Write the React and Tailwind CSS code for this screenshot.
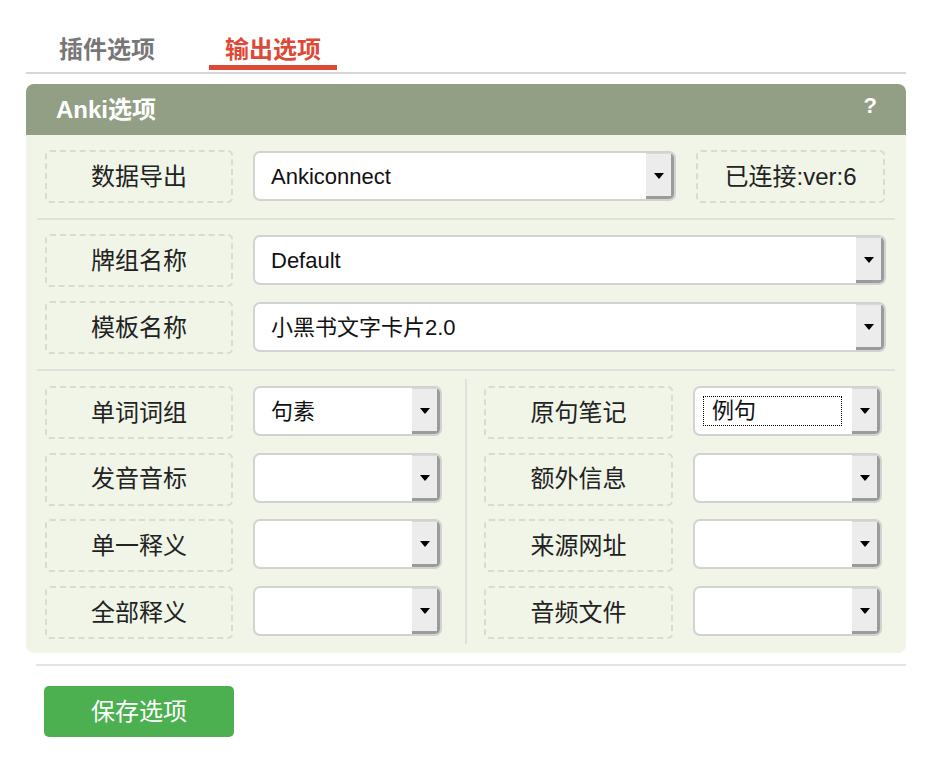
import React from 'react';

const Label = ({ children, className = '' }) => (
  <div
    className={`h-[53px] shrink-0 flex items-center justify-center rounded-[5px] border-2 border-dashed border-[#d8dbd3] text-[24px] text-[#222] ${className}`}
  >
    {children}
  </div>
);

const Select = ({ value, focused, className = '' }) => (
  <div className={`mt-[1px] h-[50px] flex rounded-[7px] border-2 border-[#d2d2d2] bg-white overflow-hidden ${className}`}>
    <div className="flex-1 flex items-center min-w-0">
      {focused ? (
        <div className="ml-[8px] mr-[10px] mt-[-1px] flex-1 h-[30px] flex items-center pl-[8px] border border-dotted border-black text-[22px] text-[#111]">
          {value}
        </div>
      ) : (
        <span className="pl-[16px] text-[22px] text-[#111] truncate">{value}</span>
      )}
    </div>
    <div className="w-[28px] shrink-0 flex items-center justify-center bg-[#ececec] border-t border-t-[#d8d8d8] border-r-[3px] border-b-[3px] border-r-[#9b9b9b] border-b-[#9b9b9b]">
      <div className="w-0 h-0 border-l-[5px] border-r-[5px] border-t-[6px] border-l-transparent border-r-transparent border-t-black mt-[2px]" />
    </div>
  </div>
);

const leftFields = [
  { label: '单词词组', value: '句素' },
  { label: '发音音标', value: '' },
  { label: '单一释义', value: '' },
  { label: '全部释义', value: '' },
];

const rightFields = [
  { label: '原句笔记', value: '例句', focused: true },
  { label: '额外信息', value: '' },
  { label: '来源网址', value: '' },
  { label: '音频文件', value: '' },
];

export default function App() {
  return (
    <div className="min-h-screen bg-white font-['Liberation_Sans','Noto_Sans_CJK_SC',sans-serif]">
      <div className="w-[880px] ml-[26px] pt-[35px]">
        {/* Tabs */}
        <div className="flex ml-[17px] gap-[38px]">
          <div className="px-4 h-[35px] leading-[30px] text-[24px] font-bold text-[#777] border-b-[5px] border-transparent">
            插件选项
          </div>
          <div className="px-4 h-[35px] leading-[30px] text-[24px] font-bold text-[#dc4a37] border-b-[5px] border-[#dc4a37]">
            输出选项
          </div>
        </div>
        <div className="mt-[2px] h-[2px] bg-[#d6d6d6]" />

        {/* Panel */}
        <div className="mt-[10px] rounded-[8px] overflow-hidden bg-[#f0f5e8]">
          <div className="h-[51px] bg-[#939f85] flex items-center justify-between pl-[30px] pr-[29px]">
            <span className="text-[24px] font-bold text-white">Anki选项</span>
            <span className="text-[22px] font-bold text-white -mt-[9px]">?</span>
          </div>

          <div className="pt-[15px]">
            <div className="flex items-start pl-[19px] pr-[21px]">
              <Label className="w-[188px]">数据导出</Label>
              <Select value="Ankiconnect" className="flex-1 mx-[20px]" />
              <Label className="w-[189px]">已连接:ver:6</Label>
            </div>

            <div className="mx-[11px] mt-[15px] mb-[14px] h-[2px] bg-[#dfe1dc]" />

            <div className="flex flex-col gap-[14px] pl-[19px] pr-[20px]">
              <div className="flex items-start gap-[20px]">
                <Label className="w-[188px]">牌组名称</Label>
                <Select value="Default" className="flex-1" />
              </div>
              <div className="flex items-start gap-[20px]">
                <Label className="w-[188px]">模板名称</Label>
                <Select value="小黑书文字卡片2.0" className="flex-1" />
              </div>
            </div>

            <div className="mx-[11px] mt-[15px] h-[2px] bg-[#dfe1dc]" />

            <div className="flex pt-[8px] pb-[9px] pl-[19px] pr-[24px]">
              <div className="w-[397px] flex flex-col gap-[13.7px] pt-[7px] pb-[5px]">
                {leftFields.map((f) => (
                  <div key={f.label} className="flex items-start gap-[20px]">
                    <Label className="w-[188px]">{f.label}</Label>
                    <Select value={f.value} className="flex-1 !mt-0" />
                  </div>
                ))}
              </div>
              <div className="ml-[23px] mr-[17px] w-[2px] bg-[#dfe1dc]" />
              <div className="w-[398px] flex flex-col gap-[13.7px] pt-[7px] pb-[5px]">
                {rightFields.map((f) => (
                  <div key={f.label} className="flex items-start gap-[20px]">
                    <Label className="w-[189px]">{f.label}</Label>
                    <Select value={f.value} focused={f.focused} className="flex-1 !mt-0" />
                  </div>
                ))}
              </div>
            </div>
          </div>
        </div>

        <div className="ml-[10px] mt-[11px] h-[2px] bg-[#e4e4e4]" />

        <button className="mt-[20px] ml-[18px] w-[190px] h-[51px] rounded-[5px] bg-[#4caf50] text-white text-[24px]">
          保存选项
        </button>
      </div>
    </div>
  );
}
